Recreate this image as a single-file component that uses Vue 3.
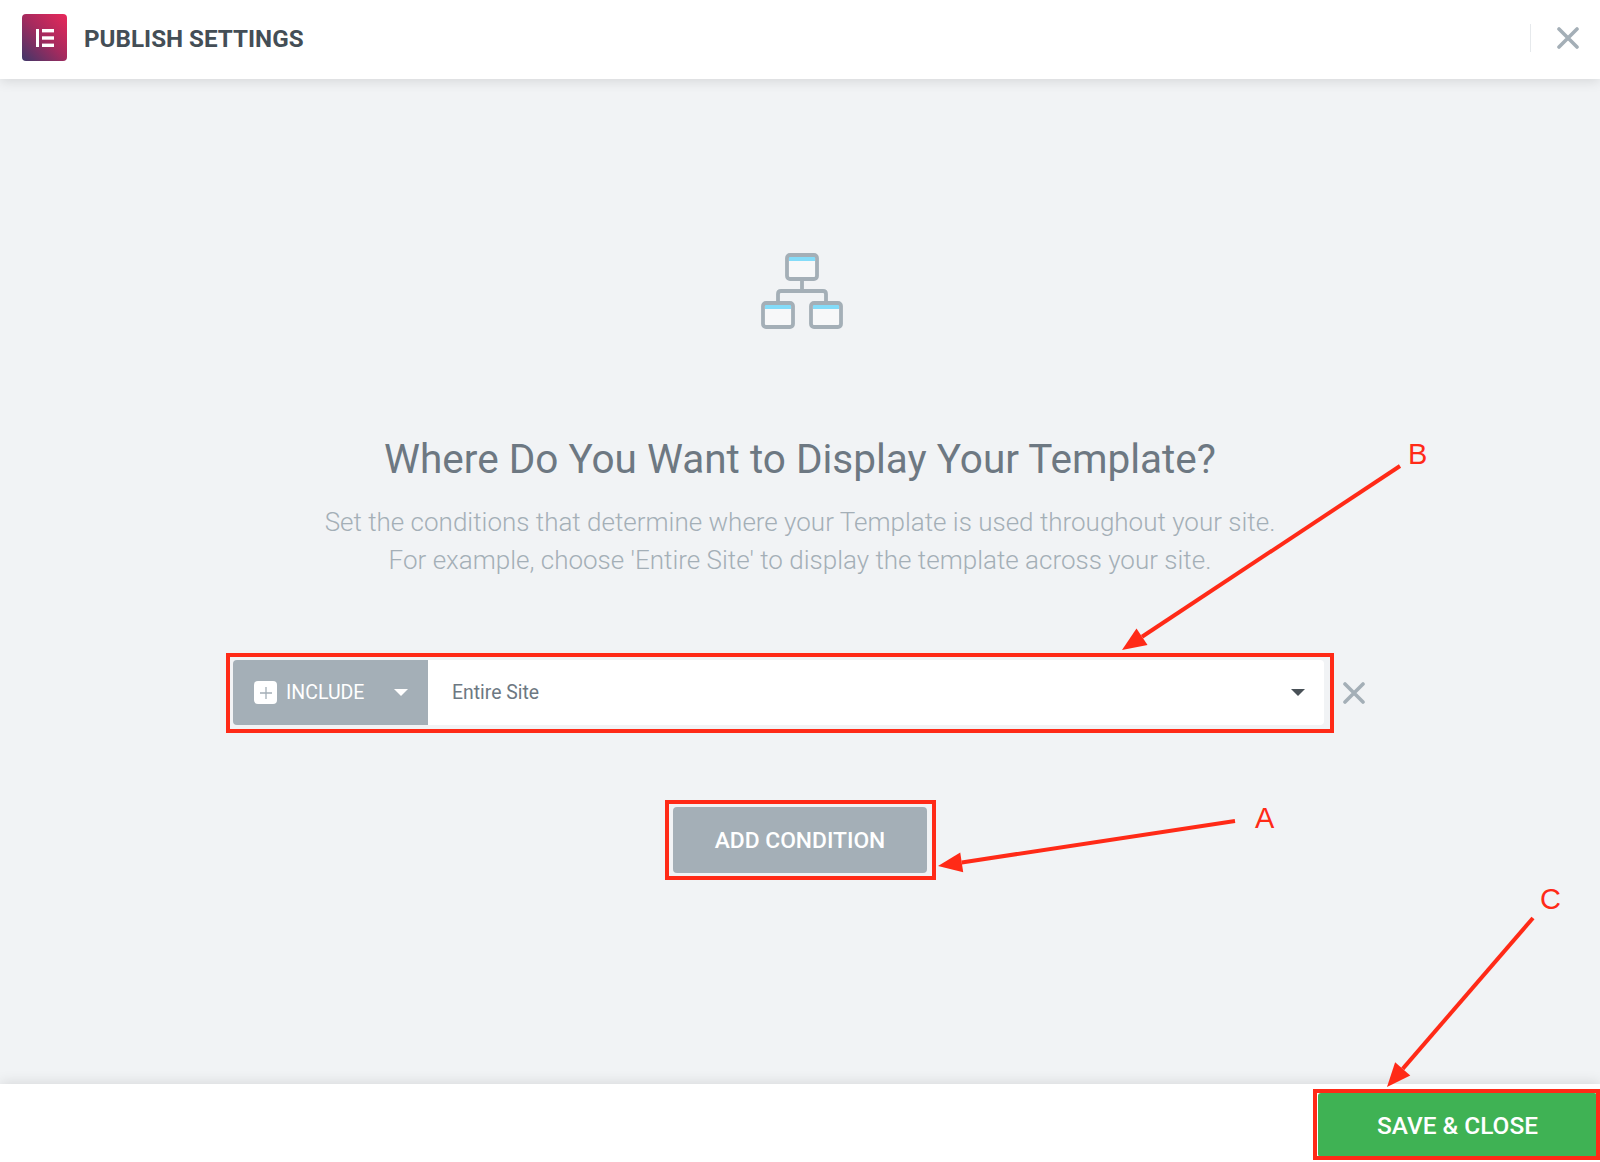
<template>
  <div class="page">
    <header class="top-bar">
      <div class="logo">
        <svg width="20" height="20" viewBox="0 0 20 20">
          <rect x="1" y="1" width="3" height="18" fill="#fff" />
          <rect x="7" y="1" width="12" height="3.4" fill="#fff" />
          <rect x="7" y="8.3" width="12" height="3.4" fill="#fff" />
          <rect x="7" y="15.6" width="12" height="3.4" fill="#fff" />
        </svg>
      </div>
      <div class="title">PUBLISH SETTINGS</div>
      <div class="top-close">
        <svg class="x-icon" width="22" height="22" viewBox="0 0 22 22">
          <path d="M2 2 L20 20 M20 2 L2 20" />
        </svg>
      </div>
    </header>

    <main class="content">
      <svg class="tree" width="82" height="76" viewBox="0 0 82 76">
        <rect x="26" y="2" width="30" height="24" rx="3" fill="#f7f8f9" />
        <rect x="28" y="4" width="26" height="4" fill="#84dcf9" />
        <rect x="26" y="2" width="30" height="24" rx="3" class="tree-line" />
        <rect x="2" y="50" width="30" height="24" rx="3" fill="#f7f8f9" />
        <rect x="4" y="52" width="26" height="4" fill="#84dcf9" />
        <rect x="2" y="50" width="30" height="24" rx="3" class="tree-line" />
        <rect x="50" y="50" width="30" height="24" rx="3" fill="#f7f8f9" />
        <rect x="52" y="52" width="26" height="4" fill="#84dcf9" />
        <rect x="50" y="50" width="30" height="24" rx="3" class="tree-line" />
        <path class="tree-line" d="M41 26 V38 M17 50 V41 Q17 38 20 38 H62 Q65 38 65 41 V50" />
      </svg>

      <h1 class="heading">Where Do You Want to Display Your Template?</h1>
      <p class="desc">
        Set the conditions that determine where your Template is used throughout your site.<br />
        For example, choose 'Entire Site' to display the template across your site.
      </p>

      <div class="condition-row">
        <div class="condition">
          <div class="include">
            <span class="plus-box">
              <svg width="14" height="14" viewBox="0 0 14 14">
                <path d="M7 1 V13 M1 7 H13" stroke="#a4afb7" stroke-width="1.3" fill="none" />
              </svg>
            </span>
            <span class="include-label">INCLUDE</span>
            <span class="caret caret-white"></span>
          </div>
          <div class="site-select">
            <span>Entire Site</span>
            <span class="caret caret-dark"></span>
          </div>
        </div>
        <svg class="x-icon row-x" width="22" height="22" viewBox="0 0 22 22">
          <path d="M2 2 L20 20 M20 2 L2 20" />
        </svg>
      </div>

      <button class="add-btn">ADD CONDITION</button>
    </main>

    <footer class="bottom-bar">
      <button class="save-btn">SAVE &amp; CLOSE</button>
    </footer>

    <!-- red annotations on top of the screenshot -->
    <svg class="arrows" width="1600" height="1162" viewBox="0 0 1600 1162">
      <g v-for="a in arrows" :key="a.label">
        <line :x1="a.x1" :y1="a.y1" :x2="a.lx" :y2="a.ly" stroke="#ff2a17" stroke-width="4" />
        <polygon :points="a.head" fill="#ff2a17" />
      </g>
    </svg>
    <span v-for="a in arrows" :key="a.label" class="note" :style="{ left: a.tx + 'px', top: a.ty + 'px' }">{{ a.label }}</span>
  </div>
</template>

<script setup>
const makeArrow = (label, x1, y1, x2, y2, tx, ty) => {
  const len = Math.hypot(x2 - x1, y2 - y1)
  const ux = (x2 - x1) / len
  const uy = (y2 - y1) / len
  const bx = x2 - ux * 24
  const by = y2 - uy * 24
  const head = [
    `${x2},${y2}`,
    `${bx - uy * 10},${by + ux * 10}`,
    `${bx + uy * 10},${by - ux * 10}`
  ].join(' ')
  return { label, x1, y1, lx: bx, ly: by, head, tx, ty }
}

const arrows = [
  makeArrow('A', 1235, 821, 938, 866, 1255, 802),
  makeArrow('B', 1400, 466, 1122, 650, 1408, 438),
  makeArrow('C', 1533, 918, 1387, 1087, 1540, 883)
]
</script>

<style scoped>
.page {
  position: relative;
  width: 1600px;
  height: 1162px;
  display: flex;
  flex-direction: column;
  overflow: hidden;
  font-family: Roboto, "Liberation Sans", sans-serif;
  background: #fff;
}

.top-bar {
  height: 79px;
  flex: none;
  display: flex;
  align-items: center;
  padding-left: 22px;
  background: #fff;
  box-shadow: 0 2px 12px rgba(0, 0, 0, 0.12);
  z-index: 1;
}

.logo {
  width: 45px;
  height: 47px;
  margin-top: -4px;
  border-radius: 4px;
  display: flex;
  align-items: center;
  justify-content: center;
  background: linear-gradient(45deg, #3f3769 0%, #a42a5e 50%, #e9285a 100%);
}

.title {
  margin-left: 17px;
  margin-top: -2px;
  font-size: 24.2px;
  font-weight: 700;
  color: #444e56;
}

.top-close {
  margin-left: auto;
  width: 70px;
  height: 28px;
  margin-top: -3px;
  display: flex;
  align-items: center;
  justify-content: flex-end;
  padding-right: 21px;
  box-sizing: border-box;
  border-left: 1px solid #e6e9ec;
}

.x-icon path {
  stroke: #a4afb7;
  stroke-width: 3.6;
  stroke-linecap: round;
  fill: none;
}

.content {
  flex: 1;
  display: flex;
  flex-direction: column;
  align-items: center;
  padding-top: 174px;
  background: #f1f3f5;
}

.tree {
  margin-left: 4px;
}

.tree-line {
  fill: none;
  stroke: #a4afb7;
  stroke-width: 3.8;
}

.heading {
  margin: 105px 0 0;
  font-size: 40.5px;
  line-height: 50px;
  font-weight: 400;
  color: #6d7882;
}

.desc {
  margin: 19px 0 0;
  font-size: 26px;
  line-height: 38px;
  font-weight: 300;
  text-align: center;
  color: #a4afb7;
}

.condition-row {
  margin-top: 81px;
  display: flex;
  align-items: center;
  width: 1134px;
}

.condition {
  position: relative;
  width: 1091px;
  height: 65px;
  display: flex;
  border-radius: 4px;
}

/* the red rectangle drawn round the row */
.condition::after {
  content: '';
  position: absolute;
  top: -7px;
  left: -7px;
  right: -10px;
  bottom: -8px;
  border: 4px solid #ff2a17;
  pointer-events: none;
}

.include {
  width: 195px;
  flex: none;
  display: flex;
  align-items: center;
  padding-left: 21px;
  box-sizing: border-box;
  color: #fff;
  background: #a4afb7;
  border-radius: 4px 0 0 4px;
}

.plus-box {
  width: 23px;
  height: 23px;
  display: flex;
  align-items: center;
  justify-content: center;
  border-radius: 4px;
  background: #fff;
}

.include-label {
  margin-left: 9px;
  font-size: 19.5px;
}

.caret {
  width: 0;
  height: 0;
  border-left: 7px solid transparent;
  border-right: 7px solid transparent;
}

.caret-white {
  margin-left: 30px;
  border-top: 7px solid #fff;
}

.caret-dark {
  border-top: 7px solid #495157;
}

.site-select {
  flex: 1;
  display: flex;
  align-items: center;
  justify-content: space-between;
  padding: 0 19px 0 24px;
  font-size: 19.4px;
  color: #6d7882;
  background: #fff;
  border-radius: 0 4px 4px 0;
}

.row-x {
  margin-left: 19px;
}

.add-btn {
  position: relative;
  margin-top: 82px;
  width: 254px;
  height: 66px;
  border: none;
  border-radius: 4px;
  font-family: inherit;
  font-size: 22.8px;
  font-weight: 500;
  color: #fff;
  background: #a4afb7;
}

.add-btn::after {
  content: '';
  position: absolute;
  top: -7px;
  left: -8px;
  right: -9px;
  bottom: -7px;
  border: 4px solid #ff2a17;
}

.bottom-bar {
  height: 78px;
  flex: none;
  display: flex;
  justify-content: flex-end;
  padding: 9px 3px 5px 0;
  box-sizing: border-box;
  background: #fff;
  box-shadow: 0 -2px 12px rgba(0, 0, 0, 0.1);
  z-index: 1;
}

.save-btn {
  position: relative;
  width: 279px;
  height: 64px;
  border: none;
  border-radius: 3px;
  font-family: inherit;
  font-size: 24.4px;
  font-weight: 500;
  color: #fff;
  background: #3fb254;
}

.save-btn::after {
  content: '';
  position: absolute;
  top: -4px;
  left: -5px;
  right: -3px;
  bottom: -3px;
  border: 4px solid #ff2a17;
}

.arrows {
  position: absolute;
  top: 0;
  left: 0;
  z-index: 2;
  pointer-events: none;
}

.note {
  position: absolute;
  z-index: 2;
  font-family: "Liberation Sans", Arial, sans-serif;
  font-size: 29px;
  line-height: 33px;
  color: #ff2a17;
}
</style>
